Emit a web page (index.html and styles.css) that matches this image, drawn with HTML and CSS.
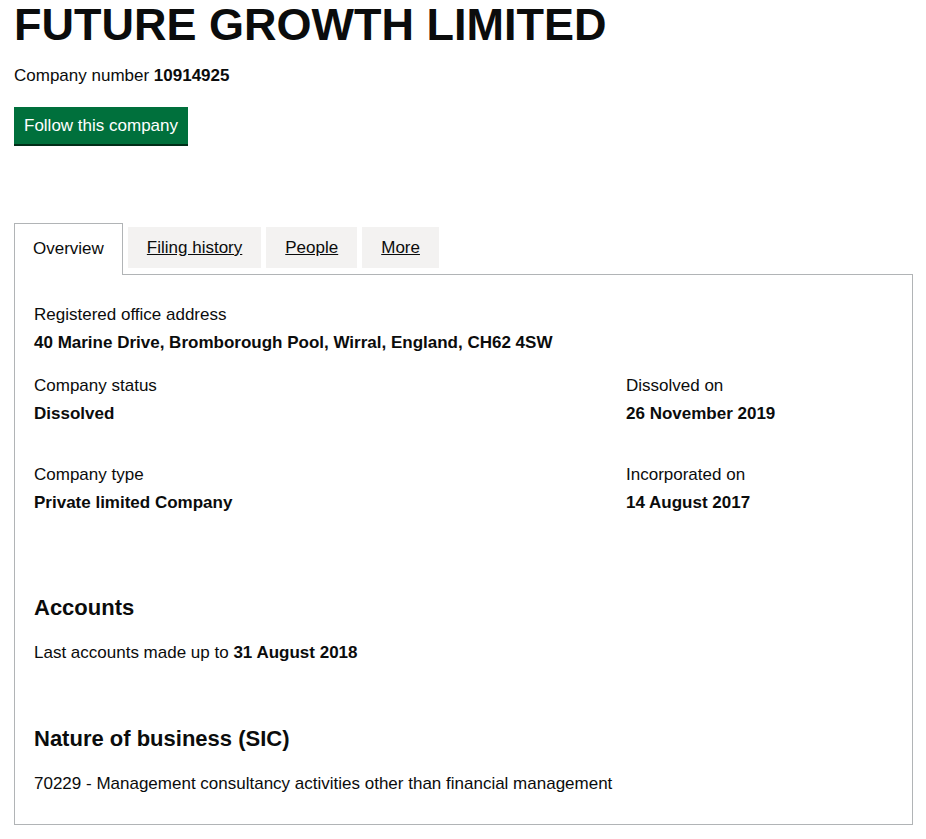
FILE: index.html
```html
<!DOCTYPE html>
<html lang="en">
<head>
  <meta charset="UTF-8" />
  <title>FUTURE GROWTH LIMITED - Overview</title>
  <link rel="stylesheet" href="styles.css">
</head>
<body>
  <div class="page">
    <h1 class="company-name">FUTURE GROWTH LIMITED</h1>
    <p class="company-number">Company number <strong>10914925</strong></p>

    <a class="button follow-btn" href="#">Follow this company</a>

    <div class="tabs">
      <ul class="tab-list">
        <li class="tab active">Overview</li>
        <li class="tab"><a href="#">Filing history</a></li>
        <li class="tab"><a href="#">People</a></li>
        <li class="tab"><a href="#">More</a></li>
      </ul>

      <div class="tab-panel">
        <dl class="field">
          <dt>Registered office address</dt>
          <dd>40 Marine Drive, Bromborough Pool, Wirral, England, CH62 4SW</dd>
        </dl>

        <div class="field-grid">
          <dl class="field">
            <dt>Company status</dt>
            <dd>Dissolved</dd>
          </dl>
          <dl class="field">
            <dt>Dissolved on</dt>
            <dd>26 November 2019</dd>
          </dl>
          <dl class="field">
            <dt>Company type</dt>
            <dd>Private limited Company</dd>
          </dl>
          <dl class="field">
            <dt>Incorporated on</dt>
            <dd>14 August 2017</dd>
          </dl>
        </div>

        <h2 class="section-heading accounts">Accounts</h2>
        <p class="section-text">Last accounts made up to <strong>31 August 2018</strong></p>

        <h2 class="section-heading sic">Nature of business (SIC)</h2>
        <p class="section-text">70229 - Management consultancy activities other than financial management</p>
      </div>
    </div>
  </div>
</body>
</html>
```

FILE: styles.css
```css
body {
  margin: 0;
  background: #fff;
  color: #0b0c0c;
  font-family: "Liberation Sans", Arial, sans-serif;
  font-size: 17px;
}
.page {
  padding: 0 13px 0 14px;
}
.company-name {
  margin: 0;
  font-size: 45px;
  line-height: 50px;
  font-weight: bold;
}
.company-number {
  margin: 14px 0 0;
  line-height: 24px;
}
.button {
  display: inline-block;
  padding: 8px 10px 8px;
  line-height: 21px;
  font-size: 17px;
  text-decoration: none;
}
.follow-btn {
  margin-top: 19px;
  background: #00703c;
  color: #fff;
  box-shadow: 0 2px 0 #002d18;
}
.tabs {
  margin-top: 79px;
}
.tab-list {
  display: flex;
  list-style: none;
  margin: 0;
  padding: 0;
  border-bottom: 1px solid #b1b4b6;
  align-items: flex-end;
}
.tab {
  margin: 0 5px 6px 0;
  padding: 10px 19px;
  background: #f3f2f1;
  line-height: 21px;
}
.tab a {
  color: #0b0c0c;
  text-decoration: underline;
}
.tab.active {
  margin-bottom: -1px;
  padding: 14px 18px 16px;
  background: #fff;
  border: 1px solid #b1b4b6;
  border-bottom: 0;
}
.tab-panel {
  border: 1px solid #b1b4b6;
  border-top: 0;
  padding: 28px 19px 28px;
}
.field {
  margin: 0;
}
.field dt {
  line-height: 24px;
}
.field dd {
  margin: 4px 0 0;
  line-height: 24px;
  font-weight: bold;
}
.field-grid {
  display: grid;
  grid-template-columns: 592px 1fr;
  row-gap: 37px;
  margin-top: 19px;
}
.section-heading {
  margin: 0;
  font-size: 22px;
  line-height: 30px;
  font-weight: bold;
}
.accounts {
  margin-top: 78px;
}
.sic {
  margin-top: 59px;
}
.section-text {
  margin: 18px 0 0;
  line-height: 24px;
}
```
